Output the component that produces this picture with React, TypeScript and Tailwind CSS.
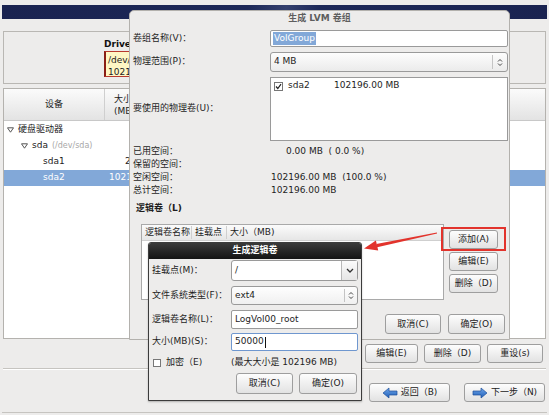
import React from 'react';

const font = "font-['DejaVu_Sans','Noto_Sans_CJK_SC',sans-serif]";

function Btn({ children, className = '' }: { children: React.ReactNode; className?: string }) {
  return (
    <div
      className={`flex items-center justify-center rounded-[3px] border border-[#9e9e9e] bg-gradient-to-b from-[#fdfdfd] to-[#e2e2e2] text-[9px] leading-none text-[#222] ${className}`}
    >
      {children}
    </div>
  );
}

function Tri() {
  return (
    <svg width="7" height="6" viewBox="0 0 7 6" className="shrink-0">
      <polygon points="0.5,0.8 6.5,0.8 3.5,5.2" fill="none" stroke="#555" strokeWidth="1" />
    </svg>
  );
}

function UpDown() {
  return (
    <svg width="6" height="9" viewBox="0 0 6 9">
      <polyline points="1,3.5 3,1.5 5,3.5" fill="none" stroke="#444" strokeWidth="1" />
      <polyline points="1,5.5 3,7.5 5,5.5" fill="none" stroke="#444" strokeWidth="1" />
    </svg>
  );
}

function ChevronDown() {
  return (
    <svg width="8" height="5" viewBox="0 0 8 5">
      <polyline points="1,1 4,4 7,1" fill="none" stroke="#333" strokeWidth="1.3" />
    </svg>
  );
}

function ArrowIcon({ dir }: { dir: 'left' | 'right' }) {
  const pts = dir === 'left' ? '1,6 7,1 7,4 15,4 15,8 7,8 7,11' : '15,6 9,1 9,4 1,4 1,8 9,8 9,11';
  return (
    <svg width="16" height="12" viewBox="0 0 16 12" className="shrink-0">
      <defs>
        <linearGradient id={`g-${dir}`} x1="0" y1="0" x2="0" y2="1">
          <stop offset="0" stopColor="#6fa6ea" />
          <stop offset="1" stopColor="#1f5fb8" />
        </linearGradient>
      </defs>
      <polygon points={pts} fill={`url(#g-${dir})`} stroke="#1d4f99" strokeWidth="0.7" />
    </svg>
  );
}

// only the parts not hidden behind the dialogs
const treeRows = [
  { depth: 0, tri: true, name: '硬盘驱动器', size: '', sizePad: '', sub: '' },
  { depth: 1, tri: true, name: 'sda', size: '', sizePad: '', sub: '(/dev/sda)' },
  { depth: 2, tri: false, name: 'sda1', size: '2', sizePad: 'pl-[20px]', sub: '' },
  { depth: 2, tri: false, name: 'sda2', size: '1021', sizePad: 'pl-[4px]', sub: '', selected: true },
];

function MainWindow() {
  return (
    <div className="flex flex-col">
      <div className="px-[2px] pt-[5px]">
        <div className="h-[14px] bg-[linear-gradient(100deg,#1a2350_0%,#1d2858_45%,#34406e_52%,#1d2858_58%,#1a2350_100%)]" />
      </div>

      {/* drive box */}
      <div className="mx-[3px] mt-[12px] h-[53px] border border-[#b9b7b3] bg-[#edeceb] pl-[100px] pt-[6px]">
        <div className="text-[9px] font-bold leading-[12px] text-[#111]">Drive</div>
        <div className="mt-[1px] h-[26px] w-[380px] border border-[#b83a2e] border-l-2 border-l-[#8a1e16] bg-[#fff7c4] pl-[2px] pt-[2px] text-[9px] leading-[12px] text-[#222]">
          <div>/dev/s</div>
          <div>10219</div>
        </div>
      </div>

      {/* tree */}
      <div className="mx-[3px] mt-[4px] h-[251px] border border-[#b4b2ae] bg-white">
        <div className="flex h-[32px] border-b border-[#c8c8c8] bg-gradient-to-b from-[#fbfbfb] to-[#e3e3e3] text-[9px] text-[#222]">
          <div className="flex w-[101px] items-center justify-center border-r border-[#cfcfcf]">设备</div>
          <div className="flex flex-col justify-center whitespace-nowrap pl-[9px] leading-[12px]">
            <span>大小</span>
            <span>(MB</span>
          </div>
          <div className="flex-1" />
        </div>
        <div className="mt-[1px] flex flex-col">
          {treeRows.map((r) => (
            <div
              key={r.name}
              className={`flex h-[16px] items-center text-[9px] ${r.selected ? 'bg-[#82a8d8] text-white' : 'text-[#222]'}`}
            >
              <div
                className={`flex w-[101px] items-center gap-[4px] ${r.depth === 0 ? 'pl-[3px]' : r.depth === 1 ? 'pl-[17px]' : 'pl-[39px]'}`}
              >
                {r.tri && <Tri />}
                <span>{r.name}</span>
                {r.sub && <span className="text-[8px] text-[#a8a8a8]">{r.sub}</span>}
              </div>
              <div className={r.sizePad}>{r.size}</div>
            </div>
          ))}
        </div>
      </div>

      <div className="mt-[5px] flex h-[19px] justify-end gap-[6px] pr-[6px]">
        <Btn className="w-[53px]">编辑(E)</Btn>
        <Btn className="w-[57px]">删除（D)</Btn>
        <Btn className="w-[56px]">重设(s)</Btn>
      </div>

      <div className="mx-[3px] mt-[5px] border-t border-[#c6c4c0] border-b border-b-white" />

      <div className="mt-[13px] flex h-[19px] justify-end gap-[14px] pr-[4px]">
        <Btn className="w-[81px] gap-[3px]">
          <ArrowIcon dir="left" />
          <span>返回（B)</span>
        </Btn>
        <Btn className="w-[81px] gap-[3px] border-[#6e95c8]">
          <ArrowIcon dir="right" />
          <span>下一步（N)</span>
        </Btn>
      </div>

      <div className="mx-[2px] mt-[10px] border-t border-[#c6c4c0]" />
    </div>
  );
}

function LvmDialog() {
  const stats = [
    { label: '已用空间：', value: '0.00 MB  ( 0.0 %)', pad: 'pl-[16px]' },
    { label: '保留的空间：', value: '', pad: '' },
    { label: '空闲空间：', value: '102196.00 MB  (100.0 %)', pad: 'pl-[1px]' },
    { label: '总计空间：', value: '102196.00 MB', pad: 'pl-[1px]' },
  ];
  return (
    <div className="absolute left-[129px] top-[10px] flex h-[330px] w-[381px] flex-col rounded-t-[5px] border border-[#b3b1ad] bg-[#edeceb] text-[9px] text-[#1e1e1e]">
      <div className="flex h-[16px] items-center justify-center font-bold text-[#5e5e5e]">生成 LVM 卷组</div>

      <div className="mt-[3px] flex h-[17px] items-center">
        <div className="w-[140px] pl-[3px]">卷组名称(V)：</div>
        <div className="mr-[1px] flex h-full flex-1 items-center rounded-[2px] border border-[#9a9a9a] bg-white pl-[2px]">
          <span className="bg-[#82a8d8] px-[1px] text-white">VolGroup</span>
        </div>
      </div>

      <div className="mt-[5px] flex h-[20px] items-center">
        <div className="w-[140px] pl-[3px]">物理范围(P)：</div>
        <div className="mr-[1px] flex h-full flex-1 items-center rounded-[3px] border border-[#9a9a9a] bg-gradient-to-b from-[#fdfdfd] to-[#ebebeb]">
          <span className="flex-1 pl-[3px]">4 MB</span>
          <div className="flex h-[14px] w-[15px] items-center justify-center border-l border-[#c4c4c4]">
            <UpDown />
          </div>
        </div>
      </div>

      <div className="mt-[5px] flex h-[64px] items-center">
        <div className="w-[140px] pl-[3px]">要使用的物理卷(U)：</div>
        <div className="mr-[1px] h-full flex-1 border border-[#9a9a9a] bg-white pl-[3px] pt-[3px]">
          <div className="flex h-[10px] items-center">
            <svg width="9" height="9" viewBox="0 0 9 9" className="shrink-0">
              <rect x="0.5" y="0.5" width="8" height="8" fill="white" stroke="#777" />
              <polyline points="2,4.5 3.8,6.5 7,2.2" fill="none" stroke="#222" strokeWidth="1.2" />
            </svg>
            <span className="ml-[5px] w-[46px]">sda2</span>
            <span>102196.00 MB</span>
          </div>
        </div>
      </div>

      <div className="mt-[4px] flex flex-col">
        {stats.map((s) => (
          <div key={s.label} className="flex h-[13px] items-center">
            <div className="w-[140px] pl-[3px]">{s.label}</div>
            <div className={`whitespace-pre ${s.pad}`}>{s.value}</div>
          </div>
        ))}
      </div>

      <div className="mt-[5px] flex h-[13px] items-center pl-[6px] font-bold">逻辑卷（L)</div>

      <div className="mt-[9px] flex pl-[11px]">
        <div className="h-[76px] w-[303px] border border-[#a9a9a9] bg-white">
          <div className="flex h-[16px] items-center border-b border-[#cfcfcf] bg-gradient-to-b from-[#fbfbfb] to-[#e6e6e6]">
            <div className="w-[50px] border-r border-[#cfcfcf] pl-[3px]">逻辑卷名称</div>
            <div className="w-[35px] border-r border-[#cfcfcf] pl-[3px]">挂载点</div>
            <div className="pl-[3px]">大小（MB)</div>
          </div>
        </div>
        <div className="ml-[5px] mt-[6px] flex w-[49px] flex-col gap-[3px]">
          <Btn className="h-[19px]">添加(A)</Btn>
          <Btn className="h-[19px]">编辑(E)</Btn>
          <Btn className="h-[19px]">删除（D)</Btn>
        </div>
      </div>

      <div className="mt-[14px] flex h-[20px] justify-end gap-[7px] pr-[4px]">
        <Btn className="w-[56px]">取消(C)</Btn>
        <Btn className="w-[57px]">确定(O)</Btn>
      </div>
    </div>
  );
}

function LvDialog() {
  return (
    <div className="absolute left-[148px] top-[242px] flex h-[159px] w-[214px] flex-col rounded-t-[3px] border border-[#3c3c3c] bg-[#edeceb] text-[9px] text-[#1e1e1e] shadow-[0_1px_2px_rgba(0,0,0,0.25)]">
      <div className="flex h-[16px] items-center justify-center rounded-t-[2px] bg-gradient-to-b from-[#3a3a3a] to-[#141414] font-bold text-white">
        生成逻辑卷
      </div>

      <div className="mt-[1px] flex h-[21px] items-center">
        <div className="w-[82px] pl-[3px]">挂载点(M)：</div>
        <div className="mr-[3px] flex h-full flex-1 rounded-[3px] border border-[#9a9a9a] bg-white">
          <span className="flex flex-1 items-center pl-[3px]">/</span>
          <div className="flex w-[16px] items-center justify-center border-l border-[#b8b8b8] bg-gradient-to-b from-[#fbfbfb] to-[#e6e6e6]">
            <ChevronDown />
          </div>
        </div>
      </div>

      <div className="mt-[5px] flex h-[19px] items-center">
        <div className="w-[82px] pl-[3px]">文件系统类型(F)：</div>
        <div className="mr-[3px] flex h-full flex-1 items-center rounded-[3px] border border-[#9a9a9a] bg-gradient-to-b from-[#fefefe] to-[#f0f0f0]">
          <span className="flex-1 pl-[3px]">ext4</span>
          <div className="flex h-[13px] w-[13px] items-center justify-center border-l border-[#c4c4c4]">
            <UpDown />
          </div>
        </div>
      </div>

      <div className="mt-[5px] flex h-[19px] items-center">
        <div className="w-[82px] pl-[3px]">逻辑卷名称(L)：</div>
        <div className="mr-[3px] flex h-full flex-1 items-center rounded-[2px] border border-[#9a9a9a] bg-white pl-[3px]">
          LogVol00_root
        </div>
      </div>

      <div className="mt-[4px] flex h-[18px] items-center">
        <div className="w-[82px] pl-[3px]">大小(MB)(S)：</div>
        <div className="mr-[3px] flex h-full flex-1 items-center rounded-[2px] border border-[#6f97cf] bg-white pl-[3px]">
          50000<span className="ml-[1px] h-[11px] w-px bg-[#111]" />
        </div>
      </div>

      <div className="mt-[5px] flex h-[13px] items-center">
        <div className="flex w-[82px] items-center pl-[4px]">
          <span className="h-[8px] w-[8px] border border-[#777] bg-white" />
          <span className="ml-[5px]">加密（E)</span>
        </div>
        <div>(最大大小是 102196 MB)</div>
      </div>

      <div className="mt-[4px] flex h-[21px] justify-end gap-[6px] pr-[4px]">
        <Btn className="w-[57px]">取消(C)</Btn>
        <Btn className="w-[58px]">确定(O)</Btn>
      </div>
    </div>
  );
}

export default function App() {
  return (
    <div className={`relative h-[415px] w-[549px] overflow-hidden bg-[#edeceb] ${font}`}>
      <MainWindow />
      <LvmDialog />
      <LvDialog />

      {/* annotation */}
      <div className="absolute left-[441px] top-[227px] h-[24px] w-[65px] border-2 border-[#e2332c]" />
      <svg className="pointer-events-none absolute left-0 top-0" width="549" height="415" viewBox="0 0 549 415">
        <polygon points="437.1,233.6 436.9,232.4 376.3,243.9 377.1,247.3" fill="#e2332c" />
        <polygon points="364,248.5 378.2,250.6 375.9,240.4" fill="#e2332c" />
      </svg>
    </div>
  );
}
